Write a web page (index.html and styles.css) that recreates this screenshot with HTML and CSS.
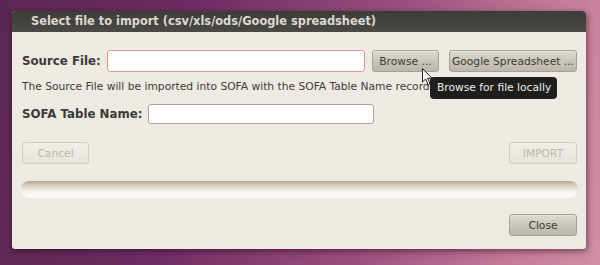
FILE: index.html
```html
<!DOCTYPE html>
<html lang="en">
<head>
    <meta charset="UTF-8">
    <title>Select file to import</title>
    <link rel="stylesheet" href="styles.css">
</head>
<body>
    <div class="dialog">
        <div class="titlebar">Select file to import (csv/xls/ods/Google spreadsheet)</div>
        <div class="dialog-body">
            <div class="row row-source">
                <label class="field-label label-source" for="sourceFile">Source File:</label>
                <input type="text" id="sourceFile" class="text-input input-source">
                <button class="btn btn-browse">Browse ...</button>
                <button class="btn btn-google">Google Spreadsheet ...</button>
            </div>
            <p class="info">The Source File will be imported into SOFA with the SOFA Table Name recorded below:</p>
            <div class="row row-table">
                <label class="field-label label-table" for="tableName">SOFA Table Name:</label>
                <input type="text" id="tableName" class="text-input input-table">
            </div>
            <div class="row actions">
                <button class="btn btn-cancel" disabled>Cancel</button>
                <button class="btn btn-import" disabled>IMPORT</button>
            </div>
            <div class="progress"></div>
            <div class="row footer">
                <button class="btn btn-close">Close</button>
            </div>
        </div>

        <!-- tooltip shown over the browse button -->
        <div class="tooltip">Browse for file locally</div>
        <svg class="pointer" width="12" height="18" viewBox="0 0 12 18">
            <path d="M0.5 0.5 L0.5 14 L3.6 11 L6 16.5 L8 15.6 L5.7 10.3 L10 10.3 Z" fill="#f4f4f4" stroke="#222" stroke-width="1" stroke-linejoin="round"/>
        </svg>
    </div>
</body>
</html>
```

FILE: styles.css
```css
body {
    margin: 0;
    width: 600px;
    height: 265px;
    overflow: hidden;
    font-family: 'DejaVu Sans', sans-serif;
    background: linear-gradient(100deg, #5a2753 0%, #6e2c62 30%, #9a4e80 62%, #c27896 85%, #cf90a6 100%);
}
.dialog {
    position: relative;
    width: 574px;
    height: 238px;
    margin: 11px 0 0 12px;
    background: #eeeae3;
    border-radius: 4px 4px 3px 3px;
    box-shadow: 1px 2px 6px rgba(30,0,20,0.55);
    box-sizing: border-box;
}
.titlebar {
    height: 21px;
    line-height: 21px;
    padding-left: 19px;
    background: linear-gradient(#3d3c38, #4a4944);
    border-radius: 4px 4px 0 0;
    color: #dcd8cf;
    font-weight: bold;
    font-size: 11.4px;
}
.dialog-body {
    padding: 18px 8px 0 9px;
    display: flex;
    flex-direction: column;
}
.row {
    display: flex;
    align-items: center;
    padding: 0 1px;
}
.field-label {
    font-weight: bold;
    font-size: 11.8px;
    color: #3a3a38;
}
.label-source {
    width: 85px;
}
.label-table {
    width: 126px;
}
.text-input {
    box-sizing: border-box;
    margin: 0;
    background: #fff;
    border: 1px solid #aaa59b;
    border-radius: 3px;
    font-family: inherit;
}
.input-source {
    width: 258px;
    height: 22px;
    border-color: #e3998a;
}
.input-table {
    width: 226px;
    height: 20px;
}
.btn {
    box-sizing: border-box;
    height: 22px;
    margin: 0;
    padding: 0;
    font-family: inherit;
    font-size: 10.7px;
    color: #3c3b37;
    background: linear-gradient(#dedad2, #c9c4ba 55%, #bcb6ab);
    border: 1px solid #a6a095;
    border-radius: 3px;
    box-shadow: inset 0 1px 0 rgba(255,255,255,0.35);
}
.btn-browse {
    width: 67px;
    margin-left: 7px;
}
.btn-google {
    width: 128px;
    margin-left: 10px;
}
.btn[disabled] {
    color: #bbb7ae;
    background: linear-gradient(#f0ede7, #e8e4dc);
    border-color: #d2cec5;
    box-shadow: none;
}
.info {
    margin: 8px 0 0 1px;
    height: 14px;
    line-height: 14px;
    font-size: 10.7px;
    color: #3c3b37;
    white-space: nowrap;
}
.row-table {
    margin-top: 10px;
}
.actions {
    margin-top: 18px;
    justify-content: space-between;
}
.btn-cancel {
    width: 67px;
}
.btn-import {
    width: 68px;
}
.progress {
    margin-top: 17px;
    height: 16px;
    border-radius: 8px;
    background: linear-gradient(#b6a891 0%, #d8cfc0 30%, #f6f3ee 65%, #fdfcfa 100%);
    box-shadow: 0 1px 0 rgba(255,255,255,0.6);
}
.footer {
    margin-top: 17px;
    justify-content: flex-end;
}
.btn-close {
    width: 68px;
}
/* sits over the end of the info line, as in the screenshot */
.tooltip {
    position: absolute;
    left: 418px;
    top: 66px;
    width: 127px;
    height: 22px;
    line-height: 22px;
    box-sizing: border-box;
    padding-left: 7px;
    background: #1e1e1d;
    color: #eeeeec;
    border-radius: 4px;
    font-size: 10.7px;
}
.pointer {
    position: absolute;
    left: 410px;
    top: 57px;
}
```
